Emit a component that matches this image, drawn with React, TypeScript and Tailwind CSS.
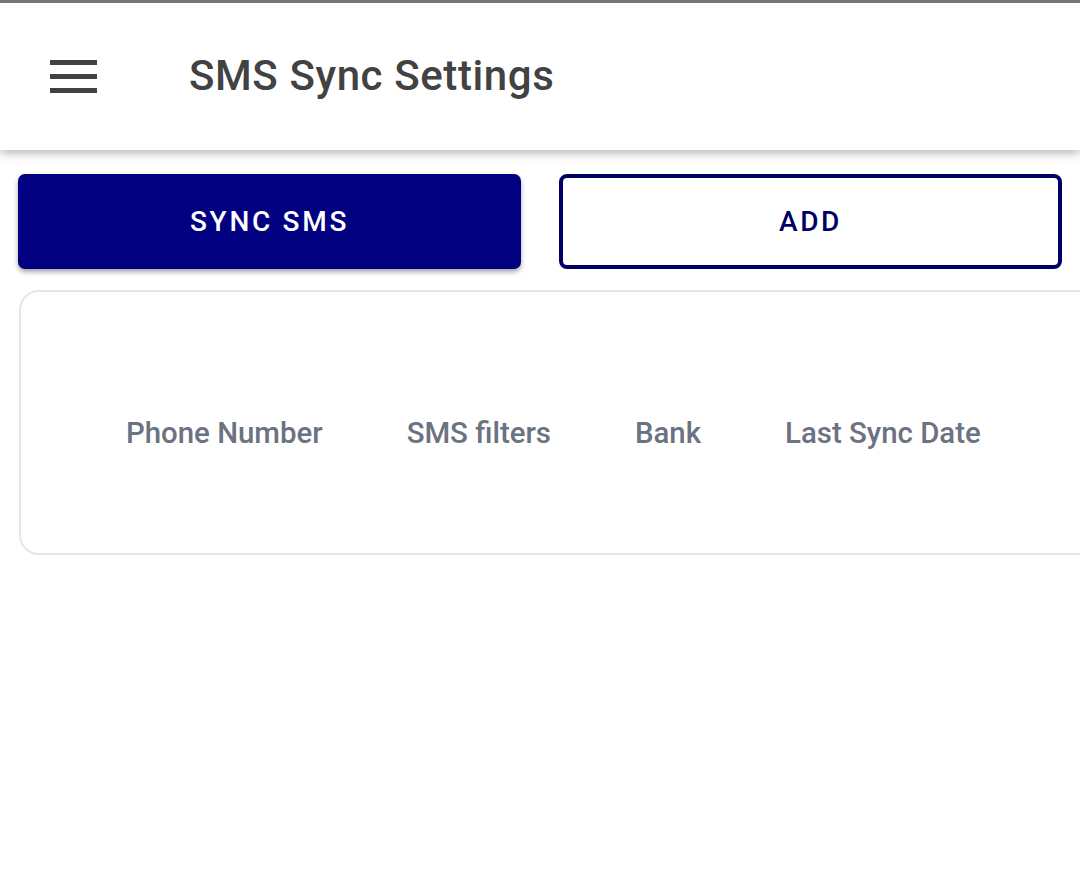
export default function App() {
  return (
    <div className="min-h-[890px] bg-white font-['Roboto',sans-serif]">
      <header className="relative z-10 h-[150px] border-t-[3px] border-[#757575] bg-white shadow-[0_4px_8px_rgba(0,0,0,0.25)] flex items-center">
        <div className="ml-[50px] flex w-[47px] flex-col gap-[9px]">
          <span className="block h-[5px] bg-[#424242]" />
          <span className="block h-[5px] bg-[#424242]" />
          <span className="block h-[5px] bg-[#424242]" />
        </div>
        <h1 className="ml-[92px] text-[42px] font-medium leading-none tracking-[0.6px] text-[#424242] pb-[2px]">
          SMS Sync Settings
        </h1>
      </header>

      <div className="flex gap-[38px] pl-[18px] pr-[18px] pt-[24px]">
        <button className="h-[95px] w-[503px] rounded-[7px] bg-[#000080] text-[28px] font-medium tracking-[2.7px] text-white shadow-[0_3px_5px_rgba(0,0,0,0.35)]">
          SYNC SMS
        </button>
        <button className="h-[95px] w-[503px] rounded-[8px] border-[4px] border-[#000066] bg-white text-[28px] font-medium tracking-[2.7px] text-[#000066]">
          ADD
        </button>
      </div>

      <div className="ml-[19px] mt-[21px] h-[265px] w-[1100px] rounded-[20px] border-[2px] border-[#e6e6e6] flex items-center pt-[22px]">
        <div className="flex gap-[84px] pl-[105px] text-[29.4px] font-medium text-[#6b7280]">
          <span>Phone Number</span>
          <span>SMS filters</span>
          <span>Bank</span>
          <span>Last Sync Date</span>
        </div>
      </div>
    </div>
  );
}
